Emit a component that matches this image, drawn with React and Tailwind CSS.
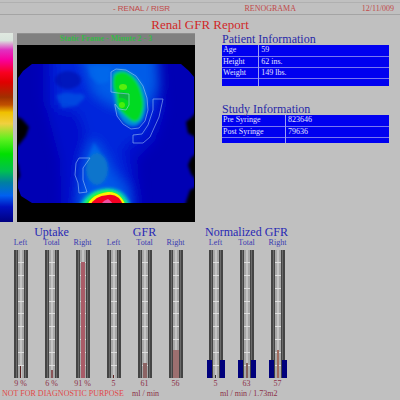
import React from 'react';

const patientRows = [
  ['Age', '59'],
  ['Height', '62 ins.'],
  ['Weight', '149 lbs.'],
  ['', ''],
];

const studyRows = [
  ['Pre Syringe', '823646'],
  ['Post Syringe', '79636'],
  ['', ''],
];

// level is the filled share of the gauge, in percent
const uptake = [
  { label: 'Left', value: '9 %', level: 9, bar: 'w-px bg-[#5a2020]' },
  { label: 'Total', value: '6 %', level: 6, bar: 'w-0.5 bg-[#8a5558]' },
  { label: 'Right', value: '91 %', level: 91, bar: 'w-1 bg-[#a85c68]' },
];

const gfr = [
  { label: 'Left', value: '5', level: 2, bar: 'w-px bg-[#5a2020]' },
  { label: 'Total', value: '61', level: 12, bar: 'w-1 bg-[#8c6464]' },
  { label: 'Right', value: '56', level: 22, bar: 'w-1.5 bg-[#9c7070]' },
];

const normalized = [
  { label: 'Left', value: '5', level: 2, bar: 'w-px bg-[#303030]' },
  { label: 'Total', value: '63', level: 12, bar: 'w-0.5 bg-[#84605c]' },
  { label: 'Right', value: '57', level: 22, bar: 'w-0.5 bg-[#a06a5c]' },
];

const ticks = [1, 2, 3, 4, 5, 6, 7, 8, 9];

function Gauge({ label, value, level, bar, range }) {
  return (
    <div className="flex flex-1 flex-col items-center">
      <span className="text-[8px] leading-[9px] text-[#3838b0]">{label}</span>
      <div className="relative mt-[3px] flex h-32 w-[14px] justify-center border-x-4 border-[#444444] bg-[#a8a8a8]">
        <div className="absolute inset-y-0 -left-0.5 w-px bg-[#6a6a6a]" />
        <div className="absolute inset-y-0 -right-0.5 w-px bg-[#6a6a6a]" />
        <div className="absolute inset-y-0 left-0.5 w-0.5 bg-[#c4c4c4]" />
        <div className="absolute inset-0 flex flex-col justify-evenly">
          {ticks.map((tick) => (
            <div key={tick} className="h-px bg-[#dedede]" />
          ))}
        </div>
        {/* Normal range markers on both sides */}
        {range && (
          <>
            <div className="absolute bottom-0 -left-[6px] h-[18px] w-[5px] bg-[#00007c]" />
            <div className="absolute bottom-0 -right-[6px] h-[18px] w-[5px] bg-[#00007c]" />
          </>
        )}
        <div className={`absolute bottom-0 ${bar}`} style={{ height: `${level}%` }} />
      </div>
      <span className="mt-px text-[8px] leading-[10px] text-[#8c3048]">{value}</span>
    </div>
  );
}

function GaugeGroup({ title, gauges, range }) {
  return (
    <section className="flex w-[93px] flex-col items-center">
      <h2 className="text-xs leading-[12px] whitespace-nowrap text-[#2828b4]">{title}</h2>
      <div className="flex w-full">
        {gauges.map((gauge) => (
          <Gauge key={gauge.label} {...gauge} range={range} />
        ))}
      </div>
    </section>
  );
}

function InfoTable({ title, rows, labelWidth, lastRow }) {
  return (
    <table className="w-full border-collapse text-left text-[8px] leading-[10px] text-[#e0e0ff]">
      <caption className="text-left text-xs leading-[12px] text-[#2828a8]">{title}</caption>
      <tbody>
        {rows.map(([label, value], i) => (
          <tr key={i} className={`bg-[#0000f0] ${i === rows.length - 1 ? lastRow : 'h-[11px] border-b border-[#7878f0]'}`}>
            <th scope="row" className={`border-r border-[#9c9cf4] p-0 pl-px font-normal ${labelWidth}`}>
              {label}
            </th>
            <td className="p-0 pl-0.5">{value}</td>
          </tr>
        ))}
      </tbody>
    </table>
  );
}

function Scan() {
  return (
    <svg viewBox="17 45 178 177" className="block w-full" role="img" aria-label="Renal scan">
      <defs>
        <clipPath id="field">
          <path d="M32 64H181L189 71L194 77V203H32L21 196L18 188V78L23 71Z" />
        </clipPath>
        <filter id="soft" x="-50%" y="-50%" width="200%" height="200%">
          <feGaussianBlur stdDeviation="6" />
        </filter>
        <filter id="edge" x="-30%" y="-30%" width="160%" height="160%">
          <feGaussianBlur stdDeviation="1.5" />
        </filter>
        <filter id="fine" x="-30%" y="-30%" width="160%" height="160%">
          <feGaussianBlur stdDeviation="0.7" />
        </filter>
      </defs>
      <rect x="17" y="45" width="178" height="177" fill="#000" />
      <g clipPath="url(#field)">
        <rect x="17" y="60" width="178" height="150" fill="#0000b4" />
        <g filter="url(#soft)">
          <path d="M44 50H158L164 110L155 140L136 160L140 215H62L60 160L52 130L44 100Z" fill="#0010cc" />
          <path d="M54 50H156L156 104L146 132L122 148L130 190L133 215H75L80 155L86 135L78 112L56 108Z" fill="#0028dc" />
          <path d="M80 50H156L158 86L146 106H114L94 94Z" fill="#005ce8" />
          <path d="M93 138L103 153L114 174L128 190L130 215H78L84 165Z" fill="#0058e8" />
        </g>
        <g filter="url(#edge)">
          <g opacity="0.4">
            <ellipse cx="68" cy="80" rx="13" ry="9" fill="#000090" />
            <path d="M56 96Q64 90 76 94Q84 92 85 98L76 106L62 108Z" fill="#0078e8" />
            <path d="M88 66H111L109 82L98 84L90 76Z" fill="#0078f0" />
            <path d="M94 142L99 150L104 160H87Z" fill="#0088f0" />
          </g>
          <ellipse cx="97" cy="169" rx="11" ry="16" fill="#0874cc" />
          <path d="M112 72Q117 68 125 70Q137 74 143 86Q149 101 145 115Q141 128 130 126Q122 124 116 110Q114 99 112 91Z" fill="#0088dc" />
          <path d="M114 75Q119 70 126 72Q138 78 142 94Q146 108 140 119Q135 125 129 119Q120 112 117 105L116 94Q111 87 114 75Z" fill="#00da24" />
          <path d="M79 206Q87 189 107 188Q125 187 131 206Z" fill="#00b4c8" />
          <path d="M83 207Q89 191 107 190Q122 190 128 207Z" fill="#20ff20" />
          {/* Cold spots on the rim */}
          <path d="M12 114L22 119L29 127L26 136L18 146H12ZM12 160L18 164L20 176L12 190ZM198 110L191 118L186 122L188 133L198 139ZM198 152L191 158L188 165L191 174L198 182ZM198 186L190 190L184 208H198Z" fill="#000" />
        </g>
        <g filter="url(#fine)">
          <ellipse cx="123" cy="87" rx="4" ry="3" fill="#58ee08" />
          <circle cx="122" cy="105" r="3" fill="#48ee08" />
          <path d="M119 93Q123 91 128 94V101Q124 97 119 98Z" fill="#0cb440" />
          <path d="M87 206Q91 194 108 192Q120 191 126 206Z" fill="#fff000" />
          <path d="M90 207Q93 196 108 195Q119 193 124 207Z" fill="#f40020" />
          <path d="M101 204Q104 200 108 199Q111 201 113 204Z" fill="#f050a0" />
        </g>
      </g>
      {/* Regions of interest */}
      <g fill="none" stroke="#9cc4f4" strokeWidth="0.8" opacity="0.75">
        <path d="M111 92V72L116 69L126 70L136 76L143 86L147 98L148 110L145 121L139 128L131 129L123 124L117 116L115 106V104L119 109L126 110L129 105V94L118 93L111 92" />
        <path d="M153 99H163L159 117L154 128L150 137L143 143H133V135L142 134L148 125L153 110Z" />
        <path d="M90 158H79L76 163L75 175L78 183L79 193L87 192L83 180V168Z" />
      </g>
    </svg>
  );
}

export default function App() {
  return (
    <div className="min-h-screen bg-[#c0c0c0] font-['Liberation_Serif',serif]">
      <header className="grid grid-cols-[17fr_13fr_10fr] border-b border-[#a4a4a4] pt-0.5 text-[8px] leading-[11px] text-[#c04848]">
        <span className="border-t border-[#b0b0b0] text-right font-['Liberation_Sans',sans-serif]">- RENAL / RISR</span>
        <span className="border-t border-[#b0b0b0] pr-1 text-right">RENOGRAMA</span>
        <span className="border-t border-[#b0b0b0] pr-1.5 text-right">12/11/009</span>
      </header>

      <h1 className="pt-px text-center text-[13px] leading-[17px] text-[#d02828]">Renal GFR Report</h1>

      <main>
        <div className="flex">
          {/* Colour scale */}
          <div className="w-[3.25%] bg-[linear-gradient(to_bottom,#e0e8e0_0%,#d8e4dc_4%,#e030c0_9%,#f800a0_14%,#f80020_21%,#e00000_26%,#a03000_34%,#c05000_38%,#f0c000_42%,#f0d040_48%,#60f020_56%,#00e000_64%,#00c050_73%,#0080a0_79%,#0060f0_86%,#0010c0_92%,#000080_100%)]" />
          <div className="ml-1 w-[44.5%] border-t border-[#909090] bg-[#808080]">
            <p className="h-[11px] text-center text-[8px] leading-[10px] font-bold whitespace-nowrap text-[#38b848]">Static Frame - Minute 2 - 3</p>
            <Scan />
          </div>
          <div className="ml-[27px] mr-[11px] flex-1">
            <InfoTable title="Patient Information" rows={patientRows} labelWidth="w-[22%]" lastRow="h-[8px]" />
            <div className="mt-[17px]">
              <InfoTable title="Study Information" rows={studyRows} labelWidth="w-[38%]" lastRow="h-[6px]" />
            </div>
          </div>
        </div>

        <div className="mt-1 flex pl-[5px]">
          <GaugeGroup title="Uptake" gauges={uptake} />
          <GaugeGroup title="GFR" gauges={gfr} />
          <div className="ml-[9px]">
            <GaugeGroup title="Normalized GFR" gauges={normalized} range />
          </div>
        </div>
      </main>

      <footer className="flex pl-0.5 text-[8px] leading-[10px] whitespace-nowrap text-[#8c3048]">
        <span className="w-[130px] text-[#e04848]">NOT FOR DIAGNOSTIC PURPOSE</span>
        <span className="w-[88px]">ml / min</span>
        <span>ml / min / 1.73m2</span>
      </footer>
    </div>
  );
}
